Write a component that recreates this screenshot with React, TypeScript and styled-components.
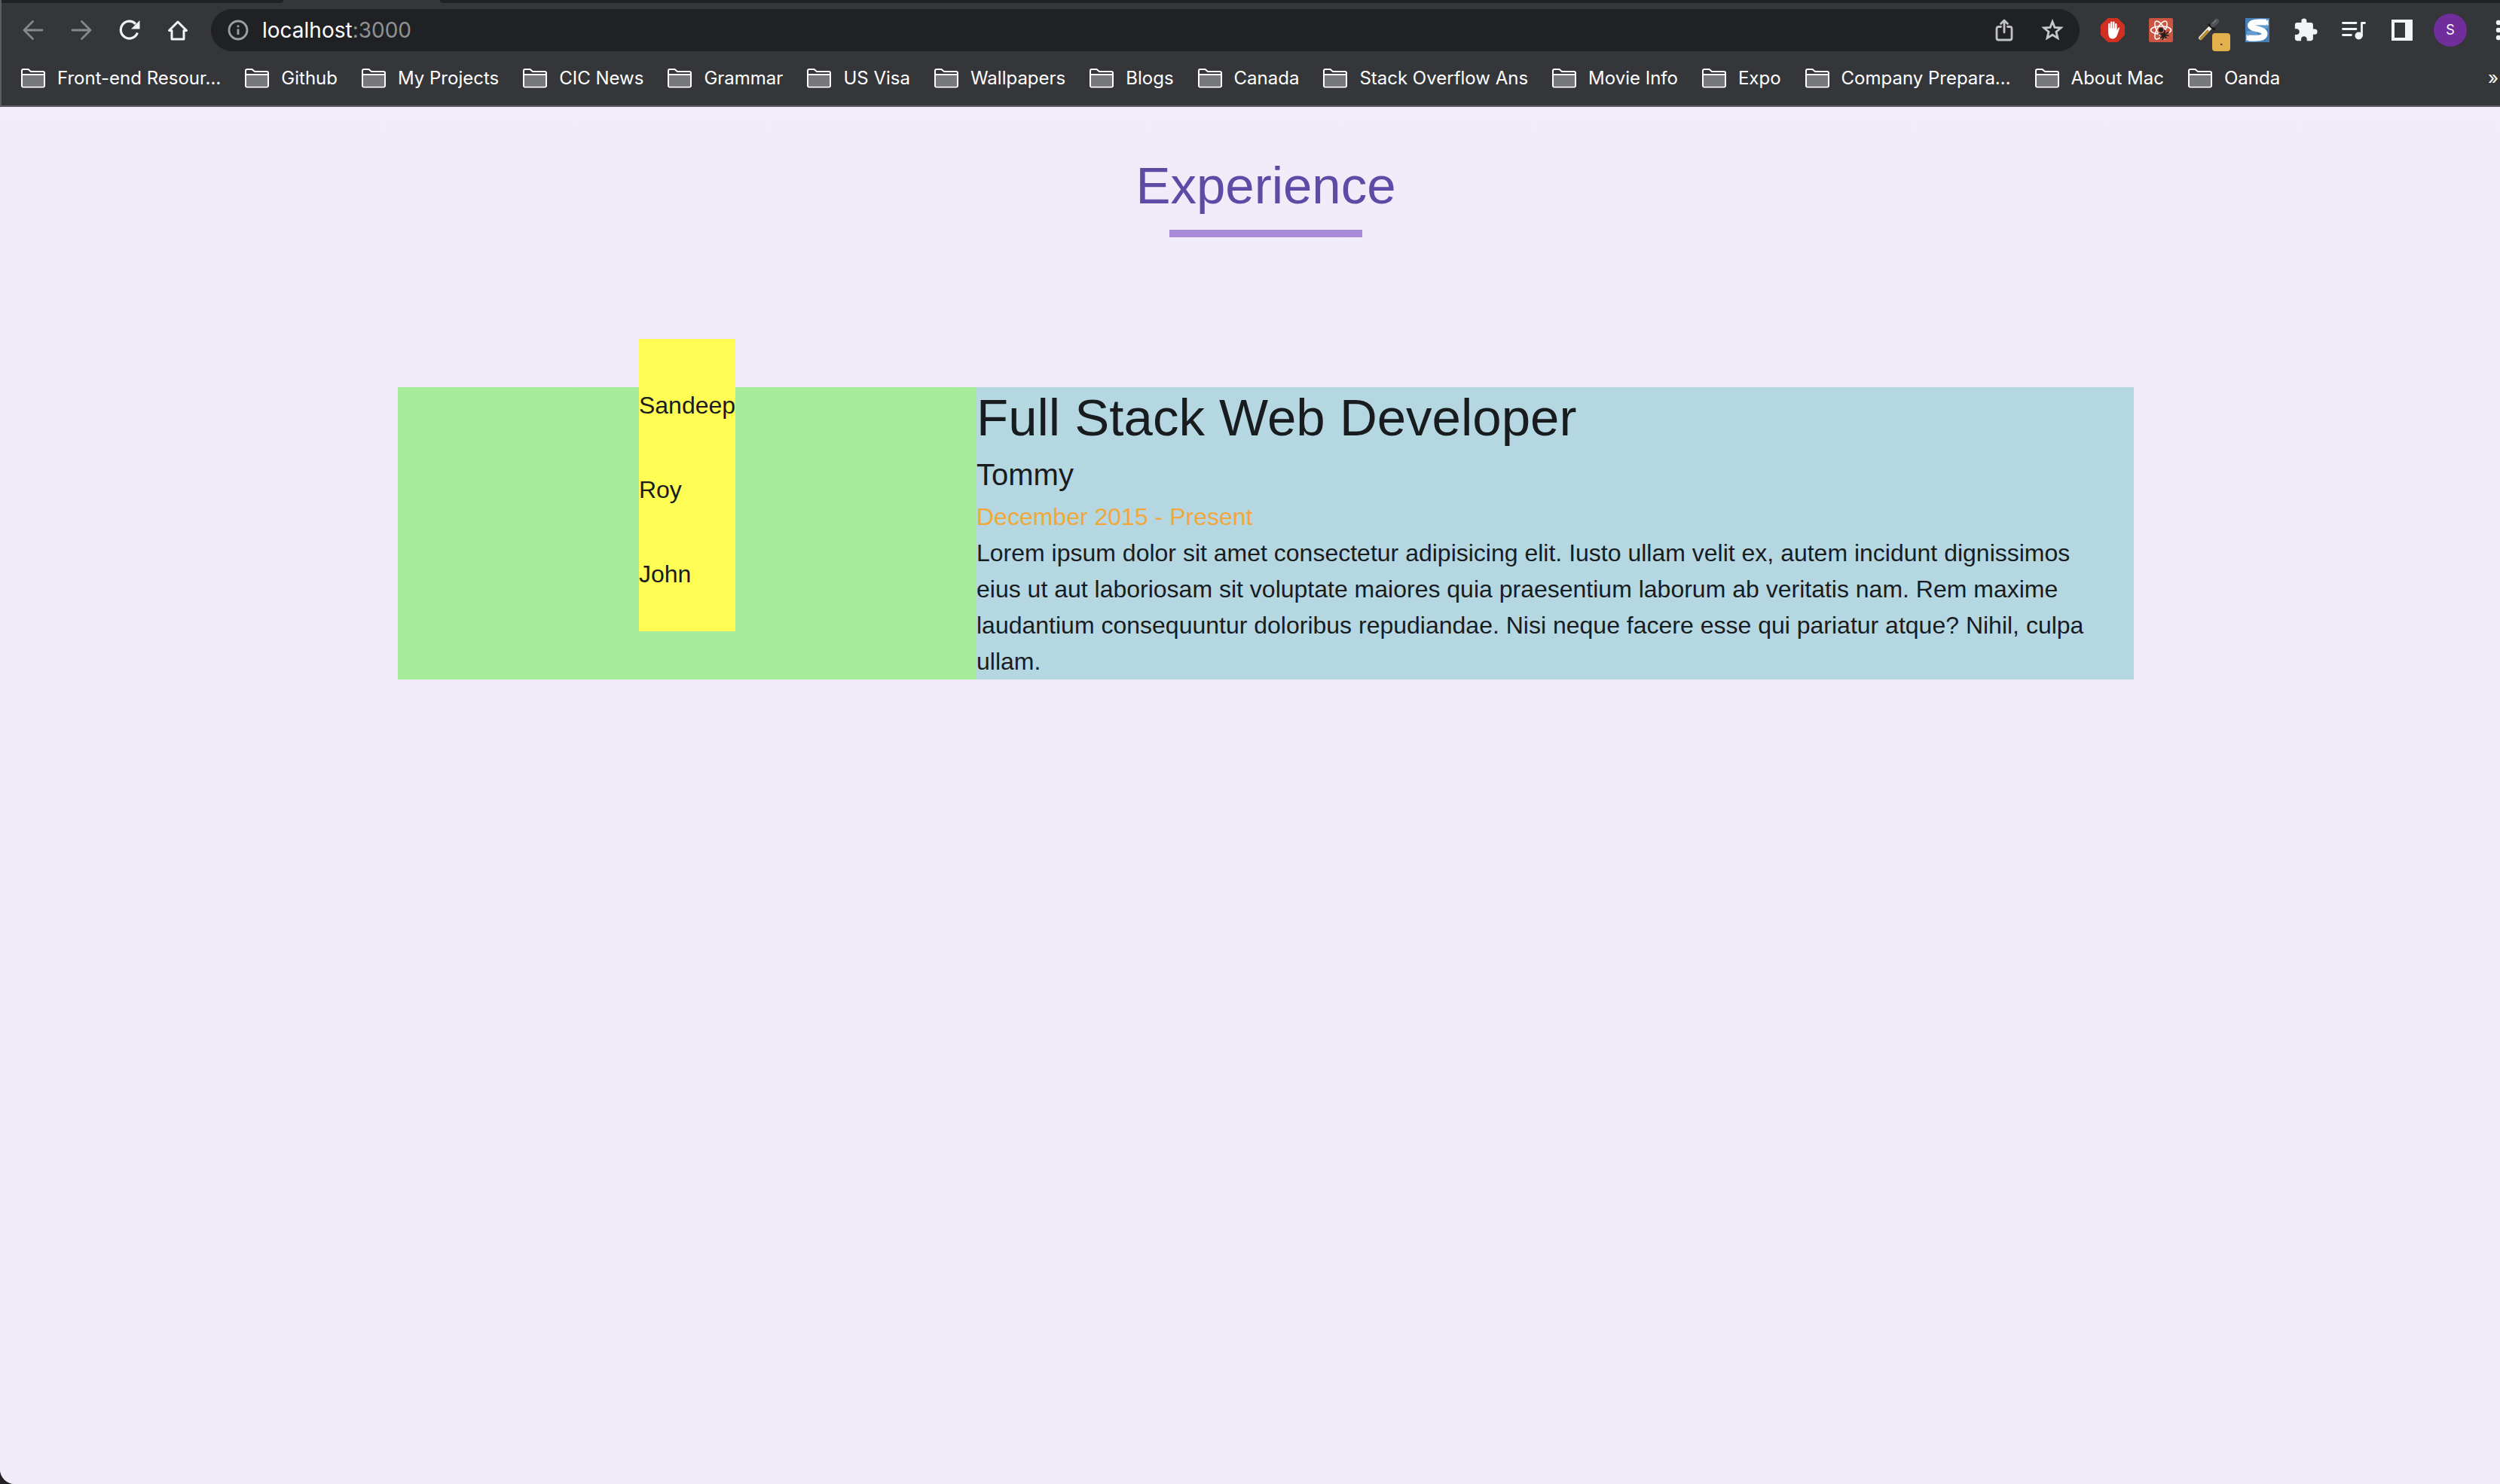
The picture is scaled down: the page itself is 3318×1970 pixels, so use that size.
import React from "react";
import styled, { createGlobalStyle } from "styled-components";

const GlobalStyle = createGlobalStyle`
  *, *::before, *::after { box-sizing: border-box; }
  html { background: #242227; }
  body { margin: 0; font-family: "Liberation Sans", Arial, sans-serif; }
  h1, h2, h3, p, ul { margin: 0; padding: 0; font-weight: 400; }
  button { border: 0; padding: 0; background: none; font: inherit; color: inherit; }
  svg { display: block; flex: none; }
`;

/* The window runs a little past the right edge of the screen. */
const Viewport = styled.div`
  min-height: 100vh;
  overflow: hidden;
  display: flex;
`;

const Window = styled.div`
  flex: none;
  width: calc(100% + 42px);
  display: flex;
  flex-direction: column;
  overflow: hidden;
  border-bottom-left-radius: 20px;
  background: #f1ebf9;
`;

const Chrome = styled.header`
  border-left: 2px solid #5c5d60;
  border-bottom: 2px solid #626366;
  background: #35363a;
  color: #fff;
  font-family: Inter, "Liberation Sans", sans-serif;
`;

const TabStrip = styled.div`
  display: flex;
  gap: 208px;
  height: 4px;
`;

const InactiveTabs = styled.div<{ $grow?: boolean }>`
  width: 374px;
  flex: ${(p) => (p.$grow ? "1" : "none")};
  background: #202124;
  border-radius: ${(p) => (p.$grow ? "0 0 0 4px" : "0 0 4px 0")};
`;

const Toolbar = styled.div`
  display: flex;
  align-items: center;
  height: 72px;
  padding: 0 12px 0 10px;
`;

const IconButton = styled.button<{ $dim?: boolean }>`
  width: 64px;
  height: 56px;
  flex: none;
  display: grid;
  place-items: center;
  color: ${(p) => (p.$dim ? "#87888a" : "#f1f3f4")};
`;

const Omnibox = styled.div`
  flex: 1;
  display: flex;
  align-items: center;
  height: 56px;
  margin: 0 12px;
  padding: 0 4px 0 20px;
  border-radius: 28px;
  background: #202124;
  color: #bdc1c6;
`;

const Address = styled.div`
  flex: 1;
  margin-left: 16px;
  font-size: 28px;
  line-height: 32px;
  color: #909193;
`;

const Host = styled.span`
  color: #fff;
`;

const Extension = styled(IconButton)`
  position: relative;
`;

const Badge = styled.span`
  position: absolute;
  right: 4px;
  bottom: 0;
  width: 24px;
  height: 24px;
  border-radius: 4px;
  background: #e3b04e;
  color: #202124;
  font-size: 16px;
  line-height: 20px;
  text-align: center;
`;

const Avatar = styled.span`
  width: 44px;
  height: 44px;
  border-radius: 50%;
  background: #712d9c;
  color: #fff;
  font-size: 18px;
  line-height: 44px;
  text-align: center;
`;

const Bookmarks = styled.nav`
  display: flex;
  align-items: center;
  gap: 32px;
  height: 64px;
  padding: 0 44px 8px 26px;
`;

const Bookmark = styled.button`
  flex: none;
  display: flex;
  align-items: center;
  gap: 16px;
  font-size: 24px;
  font-weight: 400;
  line-height: 32px;
`;

const Overflow = styled(Bookmark)`
  margin-left: auto;
`;

const Page = styled.main`
  flex: 1;
  padding: 64px 40px;
  background: linear-gradient(#f2ebf9, #f0ebf9 50%, #efebf9);
  color: #191c1f;
`;

const SectionTitle = styled.h1`
  padding-bottom: 2px;
  font-size: 69px;
  line-height: 82px;
  text-align: center;
  color: #5e4ba5;
`;

const Underline = styled.div`
  width: 256px;
  height: 10px;
  margin: 15px auto 199px;
  background: #a98ad6;
`;

const Experience = styled.section`
  display: grid;
  grid-template-columns: 1fr 2fr;
  max-width: 2304px;
  margin: 0 auto;
`;

const People = styled.div`
  display: flex;
  justify-content: center;
  background: #a6eb99;
`;

const PeopleList = styled.ul`
  margin: -64px 0 64px;
  background: #fffd54;
  list-style: none;
  font-size: 32px;
  line-height: 48px;
`;

const Person = styled.li`
  padding-top: 64px;
`;

const Job = styled.article`
  background: #b4d7e2;
`;

const Role = styled.h2`
  padding-bottom: 2px;
  font-size: 69px;
  line-height: 82px;
`;

const Company = styled.h3`
  font-size: 40px;
  line-height: 64px;
`;

const Text = styled.p<{ $accent?: boolean }>`
  padding-right: 40px;
  font-size: 32px;
  line-height: 48px;
  color: ${(p) => (p.$accent ? "#f2a73b" : "inherit")};
`;

const bookmarks = [
  "Front-end Resour…",
  "Github",
  "My Projects",
  "CIC News",
  "Grammar",
  "US Visa",
  "Wallpapers",
  "Blogs",
  "Canada",
  "Stack Overflow Ans",
  "Movie Info",
  "Expo",
  "Company Prepara…",
  "About Mac",
  "Oanda",
];

const people = ["Sandeep", "Roy", "John"];

const Arrow = ({ forward }: { forward?: boolean }) => (
  <svg width="28" height="28" viewBox="0 0 28 28" fill="none" stroke="currentColor" strokeWidth="2.8" strokeLinecap="round" strokeLinejoin="round">
    <path d={forward ? "M2 14H25M14.5 2.5 26 14 14.5 25.5" : "M26 14H3M13.5 2.5 2 14 13.5 25.5"} />
  </svg>
);

const Reload = () => (
  <svg width="28" height="28" viewBox="0 0 28 28">
    <path d="M24.4 17.5A11.4 11.4 0 1 1 22 5.8" fill="none" stroke="currentColor" strokeWidth="3.2" />
    <path d="M27.5 1V12.5H16Z" fill="currentColor" />
  </svg>
);

const Home = () => (
  <svg width="28" height="28" viewBox="0 0 28 28" fill="none" stroke="currentColor" strokeWidth="3" strokeLinejoin="round">
    <path d="M14 3 2.5 14.5H6V26H22V14.5H25.5Z" />
  </svg>
);

const Info = () => (
  <svg width="32" height="32" viewBox="0 0 32 32" fill="none" stroke="#9aa0a6" strokeWidth="2.8">
    <circle cx="16" cy="16" r="12" />
    <path d="M16 14.5V22M16 9.5V12.3" />
  </svg>
);

const Share = () => (
  <svg width="24" height="30" viewBox="0 0 24 30" fill="none" stroke="#c0c1c2" strokeWidth="2.8" strokeLinecap="round" strokeLinejoin="round">
    <path d="M7.5 10.5H4.5Q2 10.5 2 13V25.5Q2 28 4.5 28H19.5Q22 28 22 25.5V13Q22 10.5 19.5 10.5H16.5" />
    <path d="M12 18V2.5M7.5 6.5 12 2 16.5 6.5" />
  </svg>
);

const Star = () => (
  <svg width="30" height="30" viewBox="0 0 30 30" fill="none" stroke="#c7c8c9" strokeWidth="2.8">
    <path d="M15 3.7 18 11.4 26.3 12 20 17.3 22 25.6 15 21.2 8 25.6 10 17.3 3.7 12 12 11.4Z" />
  </svg>
);

const StopHand = () => (
  <svg width="32" height="32" viewBox="0 0 32 32">
    <path d="M9.5 0H22.5L32 9.5V22.5L22.5 32H9.5L0 22.5V9.5Z" fill="#d12f22" />
    <path d="M11.3 17V8M14.2 15V5.8M17.3 15V5.8M20.3 16V8.3" stroke="#fff" strokeWidth="2.4" strokeLinecap="round" />
    <path d="M10.1 13.5H21.5V17L23 13.6Q23.8 12 25.2 13L22 22.5Q20 27.5 15.5 27.5 10.5 27.5 10.1 20Z" fill="#fff" />
  </svg>
);

const ReactBug = () => (
  <svg width="32" height="32" viewBox="0 0 32 32">
    <rect width="32" height="32" rx="2" fill="#cb5541" />
    <g fill="none" stroke="#fff" strokeWidth="1.5">
      <ellipse cx="16" cy="16" rx="13.5" ry="5.2" />
      <ellipse cx="16" cy="16" rx="13.5" ry="5.2" transform="rotate(60 16 16)" />
      <ellipse cx="16" cy="16" rx="13.5" ry="5.2" transform="rotate(120 16 16)" />
    </g>
    <path d="M17 18 23 16 26 23 22 29 14 25Z" fill="#cb5541" />
    <circle cx="16" cy="15.8" r="3" fill="#221f1f" />
    <path d="M15.5 21 21 18.5 23.5 23.5 18.5 26.5Z" fill="#221f1f" />
    <path d="M12.5 21H17M15 26.5 19 24M18 29 19.5 25M21 19V15.5M22.5 21 26.5 18.5M23 23 26.5 23.5M21 25 24.5 27" stroke="#221f1f" strokeWidth="1.7" />
  </svg>
);

const Dropper = () => (
  <svg width="32" height="32" viewBox="0 0 32 32" strokeLinecap="round">
    <path d="M4.5 26.5 18 12" stroke="#efeee9" strokeWidth="5" />
    <path d="M5 27 14 17.5" stroke="#b88b32" strokeWidth="3.6" />
    <path d="M16 9 22.5 14.5" stroke="#17181a" strokeWidth="3.5" />
    <path d="M21 9 26 4" stroke="#515357" strokeWidth="6.5" />
    <path d="M21 7 25 3" stroke="#777a7d" strokeWidth="1.5" />
  </svg>
);

const Stylish = () => (
  <svg width="32" height="32" viewBox="0 0 32 32">
    <rect width="32" height="32" fill="#4780b8" />
    <path d="M14 6H30V14H20ZM2 17H14L18 24 2 26Z" fill="#639bce" />
    <path d="M28 5.5C17 5 7 5 7 9.8 7 15 25.5 13.5 25.5 21 25.5 27.5 14 27 4 26.5" fill="none" stroke="#fff" strokeWidth="8" />
    <path d="M30.5 1.5V10.5L26 6ZM1.5 21.5V30.5L7 27Z" fill="#fff" />
  </svg>
);

const Puzzle = () => (
  <svg width="34" height="34" viewBox="0 0 24 24" fill="currentColor">
    <path d="M20.5 11H19V7c0-1.1-.9-2-2-2h-4V3.5a2.5 2.5 0 0 0-5 0V5H4c-1.1 0-1.99.9-1.99 2v3.8H3.5c1.49 0 2.7 1.21 2.7 2.7s-1.21 2.7-2.7 2.7H2V20c0 1.1.9 2 2 2h3.8v-1.5c0-1.49 1.21-2.7 2.7-2.7s2.7 1.21 2.7 2.7V22H17c1.1 0 2-.9 2-2v-4h1.5a2.5 2.5 0 0 0 0-5z" />
  </svg>
);

const MediaQueue = () => (
  <svg width="32" height="26" viewBox="0 0 32 26" fill="none" stroke="currentColor" strokeWidth="2.8" strokeLinecap="round" strokeLinejoin="round">
    <path d="M1.5 3.5H19M1.5 11.5H19M1.5 19.5H12.5M26.5 20.5V3.5H30.5" />
    <circle cx="22.5" cy="20.5" r="5" fill="currentColor" stroke="none" />
  </svg>
);

const SidePanel = () => (
  <svg width="28" height="28" viewBox="0 0 28 28" fill="currentColor">
    <path fillRule="evenodd" d="M0 0H28V28H0ZM4 4V24H18V4Z" />
  </svg>
);

const Dots = () => (
  <svg width="8" height="28" viewBox="0 0 8 28" fill="currentColor">
    <circle cx="4" cy="4" r="3.2" />
    <circle cx="4" cy="14" r="3.2" />
    <circle cx="4" cy="24" r="3.2" />
  </svg>
);

const Folder = () => (
  <svg width="32" height="26" viewBox="0 0 32 26">
    <path d="M1 3Q1 1 3 1H9.5L13 4H29Q31 4 31 6V22.5Q31 24.5 29 24.5H3Q1 24.5 1 22.5Z" fill="#35363a" stroke="#fff" strokeWidth="2" />
    <path d="M2 8H30V23.5H2Z" fill="#77787b" />
    <path d="M2 8H30" stroke="#fff" strokeWidth="2" />
  </svg>
);

export default function App() {
  return (
    <Viewport>
      <GlobalStyle />
      <Window>
        <Chrome>
          <TabStrip>
            <InactiveTabs />
            <InactiveTabs $grow />
          </TabStrip>
          <Toolbar>
            <IconButton $dim aria-label="Back"><Arrow /></IconButton>
            <IconButton $dim aria-label="Forward"><Arrow forward /></IconButton>
            <IconButton aria-label="Reload"><Reload /></IconButton>
            <IconButton aria-label="Home"><Home /></IconButton>
            <Omnibox>
              <Info />
              <Address><Host>localhost</Host>:3000</Address>
              <IconButton aria-label="Share"><Share /></IconButton>
              <IconButton aria-label="Bookmark this page"><Star /></IconButton>
            </Omnibox>
            <Extension aria-label="Ad blocker"><StopHand /></Extension>
            <Extension aria-label="React tools"><ReactBug /></Extension>
            <Extension aria-label="Color picker"><Dropper /><Badge>.</Badge></Extension>
            <Extension aria-label="Styles"><Stylish /></Extension>
            <IconButton aria-label="Extensions"><Puzzle /></IconButton>
            <IconButton aria-label="Media"><MediaQueue /></IconButton>
            <IconButton aria-label="Side panel"><SidePanel /></IconButton>
            <IconButton aria-label="Profile"><Avatar>S</Avatar></IconButton>
            <IconButton aria-label="Menu"><Dots /></IconButton>
          </Toolbar>
          <Bookmarks aria-label="Bookmarks">
            {bookmarks.map((name) => (
              <Bookmark key={name}><Folder />{name}</Bookmark>
            ))}
            <Overflow>»</Overflow>
          </Bookmarks>
        </Chrome>
        <Page>
          <SectionTitle>Experience</SectionTitle>
          <Underline />
          <Experience>
            <People>
              <PeopleList>
                {people.map((name) => <Person key={name}>{name}</Person>)}
              </PeopleList>
            </People>
            <Job>
              <Role>Full Stack Web Developer</Role>
              <Company>Tommy</Company>
              <Text $accent>December 2015 - Present</Text>
              <Text>
                Lorem ipsum dolor sit amet consectetur adipisicing elit. Iusto ullam velit ex, autem incidunt
                dignissimos eius ut aut laboriosam sit voluptate maiores quia praesentium laborum ab veritatis nam.
                Rem maxime laudantium consequuntur doloribus repudiandae. Nisi neque facere esse qui pariatur atque?
                Nihil, culpa ullam.
              </Text>
            </Job>
          </Experience>
        </Page>
      </Window>
    </Viewport>
  );
}
